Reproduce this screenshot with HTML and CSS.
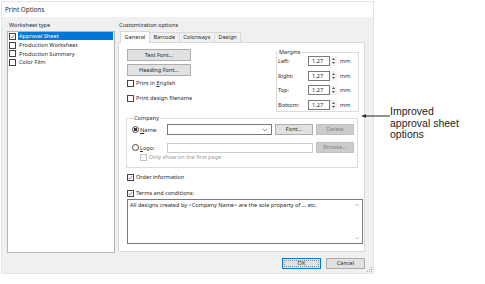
FILE: index.html
```html
<!DOCTYPE html>
<html lang="en">
<head>
  <meta charset="UTF-8">
  <title>Print Options</title>
  <link rel="stylesheet" href="styles.css">
</head>
<body>
  <div class="page">
    <div class="dialog">
      <div class="titlebar">Print Options</div>
      <div class="dialog-body">
        <div class="columns">
          <div class="col-left">
            <div class="caption">Worksheet type</div>
            <ul class="sheet-list">
              <li class="sheet-item selected">
                <span class="cb"><svg viewBox="0 0 5 5" width="5" height="5"><polyline points="0.6,2.6 1.9,3.9 4.4,0.9" fill="none" stroke="#555" stroke-width="0.7"/></svg></span>
                <span class="item-label">Approval Sheet</span>
              </li>
              <li class="sheet-item"><span class="cb"></span><span class="item-label">Production Worksheet</span></li>
              <li class="sheet-item"><span class="cb"></span><span class="item-label">Production Summary</span></li>
              <li class="sheet-item"><span class="cb"></span><span class="item-label">Color Film</span></li>
            </ul>
          </div>

          <div class="col-right">
            <div class="caption caption-right">Customization options</div>
            <div class="tabs">
              <span class="tab active">General</span>
              <span class="tab">Barcode</span>
              <span class="tab">Colorways</span>
              <span class="tab">Design</span>
            </div>
            <div class="tab-panel">
              <div class="panel-top">
                <div class="font-col">
                  <button class="btn btn-wide">Text Font...</button>
                  <button class="btn btn-wide">Heading Font...</button>
                  <label class="check-row first-check"><span class="cb"></span><span>Print in <u>E</u>nglish</span></label>
                  <label class="check-row"><span class="cb"></span><span>Print design filename</span></label>
                </div>
                <fieldset class="group margins">
                  <legend>Margins</legend>
                  <div class="margin-rows">
                    <div class="margin-row"><span class="margin-label">Left:</span><span class="field num">1.27</span><span class="spin"><svg viewBox="0 0 7 10" width="7" height="10"><polygon points="2,4 5,4 3.5,2" fill="#555"/><polygon points="2,6 5,6 3.5,8" fill="#555"/></svg></span><span class="unit">mm</span></div>
                    <div class="margin-row"><span class="margin-label">Right:</span><span class="field num">1.27</span><span class="spin"><svg viewBox="0 0 7 10" width="7" height="10"><polygon points="2,4 5,4 3.5,2" fill="#555"/><polygon points="2,6 5,6 3.5,8" fill="#555"/></svg></span><span class="unit">mm</span></div>
                    <div class="margin-row"><span class="margin-label">Top:</span><span class="field num">1.27</span><span class="spin"><svg viewBox="0 0 7 10" width="7" height="10"><polygon points="2,4 5,4 3.5,2" fill="#555"/><polygon points="2,6 5,6 3.5,8" fill="#555"/></svg></span><span class="unit">mm</span></div>
                    <div class="margin-row"><span class="margin-label">Bottom:</span><span class="field num">1.27</span><span class="spin"><svg viewBox="0 0 7 10" width="7" height="10"><polygon points="2,4 5,4 3.5,2" fill="#555"/><polygon points="2,6 5,6 3.5,8" fill="#555"/></svg></span><span class="unit">mm</span></div>
                  </div>
                </fieldset>
              </div>

              <fieldset class="group company">
                <legend>Company</legend>
                <div class="company-row">
                  <label class="radio-label"><span class="radio on"></span><span><u>N</u>ame:</span></label>
                  <span class="field combo"><svg viewBox="0 0 6 4" width="6" height="4"><polyline points="0.8,0.8 3,3 5.2,0.8" fill="none" stroke="#666" stroke-width="0.7"/></svg></span>
                  <button class="btn btn-small">Font...</button>
                  <button class="btn btn-small" disabled>Delete</button>
                </div>
                <div class="company-row logo-row">
                  <label class="radio-label"><span class="radio"></span><span><u>L</u>ogo:</span></label>
                  <span class="field logo-field"></span>
                  <button class="btn btn-small" disabled>Browse...</button>
                </div>
                <label class="check-row only-row"><span class="cb cb-off"></span><span>Only show on the first page</span></label>
              </fieldset>

              <label class="check-row option-row"><span class="cb"><svg viewBox="0 0 5 5" width="5" height="5"><polyline points="0.6,2.6 1.9,3.9 4.4,0.9" fill="none" stroke="#555" stroke-width="0.7"/></svg></span><span>Order information</span></label>
              <label class="check-row terms-row"><span class="cb"><svg viewBox="0 0 5 5" width="5" height="5"><polyline points="0.6,2.6 1.9,3.9 4.4,0.9" fill="none" stroke="#555" stroke-width="0.7"/></svg></span><span>Terms and conditions:</span></label>
              <div class="terms-box">
                <div class="terms-text">All designs created by &lt;Company Name&gt; are the sole property of ... etc.</div>
                <div class="scroll">
                  <svg viewBox="0 0 6 4" width="6" height="4"><polyline points="0.8,3.2 3,1 5.2,3.2" fill="none" stroke="#aaa" stroke-width="0.7"/></svg>
                  <svg viewBox="0 0 6 4" width="6" height="4"><polyline points="0.8,0.8 3,3 5.2,0.8" fill="none" stroke="#aaa" stroke-width="0.7"/></svg>
                </div>
              </div>
            </div>
          </div>
        </div>

        <div class="dialog-footer">
          <button class="btn btn-foot btn-default">OK</button>
          <button class="btn btn-foot">Cancel</button>
        </div>
        <svg class="grip" viewBox="0 0 5 5" width="5" height="5"><rect x="4" y="0" width="1" height="1" fill="#aaa"/><rect x="2" y="2" width="1" height="1" fill="#aaa"/><rect x="4" y="2" width="1" height="1" fill="#aaa"/><rect x="0" y="4" width="1" height="1" fill="#aaa"/><rect x="2" y="4" width="1" height="1" fill="#aaa"/><rect x="4" y="4" width="1" height="1" fill="#aaa"/></svg>
      </div>
    </div>

    <div class="callout">
      <svg class="callout-arrow" viewBox="0 0 29 14" width="29" height="14"><polygon points="0,10 5,8.3 5,11.7" fill="#222"/><line x1="4" y1="10" x2="29" y2="10" stroke="#222" stroke-width="1"/></svg>
      <div class="callout-text">Improved<br>approval sheet<br>options</div>
    </div>
  </div>
</body>
</html>
```

FILE: styles.css
```css
* {
  box-sizing: border-box;
}

body {
  margin: 0;
  background: #fff;
  font-family: "Noto Sans", "Open Sans", sans-serif;
  font-size: 5.6px;
  color: #2a2a2a;
}

.page {
  position: relative;
  width: 485px;
  height: 284px;
}

.dialog {
  margin: 1px 0 0 1px;
  width: 373px;
  border: 1px solid #e4e4e4;
  background: #fff;
}

.titlebar {
  height: 15px;
  padding: 4px 0 0 3px;
  line-height: 8px;
  font-size: 6.3px;
}

.dialog-body {
  position: relative;
  height: 256px;
  padding: 3px 8px 4px 5px;
  background: #f0f0f0;
}

.columns {
  display: flex;
  gap: 3px;
}

.col-left {
  width: 108px;
}

.col-right {
  width: 247px;
}

.caption {
  height: 11px;
  line-height: 11px;
  padding-left: 2px;
}

.caption-right {
  padding-left: 1px;
}

/* worksheet list */
.sheet-list {
  list-style: none;
  margin: 0;
  padding: 0 1px;
  height: 222px;
  background: #fff;
  border: 1px solid #b4b4b4;
}

.sheet-item {
  display: flex;
  align-items: center;
  gap: 2px;
  height: 8.7px;
}

.item-label {
  flex: 1;
  height: 8px;
  line-height: 8px;
  padding-left: 1px;
  white-space: nowrap;
}

.sheet-item.selected .item-label {
  background: #0078d7;
  color: #fff;
}

.cb {
  display: flex;
  align-items: center;
  justify-content: center;
  flex: none;
  width: 7px;
  height: 7px;
  border: 1px solid #444;
  background: #fff;
}

.cb-off {
  border-color: #c4c4c4;
}

.radio {
  flex: none;
  width: 7px;
  height: 7px;
  border: 1px solid #444;
  border-radius: 50%;
  background: #fff;
}

.radio.on {
  background: radial-gradient(circle, #333 1.4px, #fff 1.9px);
}

/* tabs */
.tabs {
  display: flex;
  align-items: flex-end;
  height: 11px;
  padding-left: 2px;
}

.tab {
  height: 10px;
  line-height: 9px;
  padding: 0 3.6px;
  margin-left: -1px;
  border: 1px solid #d9d9d9;
  border-bottom: none;
  background: #f0f0f0;
}

.tab:first-child {
  margin-left: 0;
}

.tab.active {
  position: relative;
  z-index: 1;
  height: 12px;
  line-height: 10px;
  margin-bottom: -1px;
  background: #fff;
}

.tab-panel {
  height: 210px;
  padding: 6px 0 0 7px;
  border: 1px solid #d9d9d9;
  background: #fff;
}

.panel-top {
  display: flex;
  justify-content: space-between;
  height: 63px;
  padding-right: 5px;
}

.font-col {
  display: flex;
  flex-direction: column;
  gap: 3px;
  padding-left: 1px;
}

/* buttons */
.btn {
  height: 12px;
  padding: 0;
  border: 1px solid #adadad;
  background: #e1e1e1;
  font-family: inherit;
  font-size: 5.6px;
  color: #2a2a2a;
  line-height: 10px;
  text-align: center;
}

.btn:disabled {
  border-color: #bfbfbf;
  background: #cccccc;
  color: #838383;
}

.btn-wide {
  width: 64px;
}

.btn-small {
  flex: none;
  width: 38px;
  height: 11px;
  line-height: 9px;
}

.btn-foot {
  width: 39px;
  height: 11px;
  line-height: 9px;
}

.btn-default {
  border-color: #0078d7;
  outline: 1px dotted #8a8a8a;
  outline-offset: -3px;
}

.check-row {
  display: flex;
  align-items: center;
  gap: 2px;
  height: 12px;
  white-space: nowrap;
}

.first-check {
  margin-top: -2px;
}

u {
  text-decoration: underline;
}

/* group boxes */
.group {
  margin: 0;
  padding: 0 0 1px 1px;
  min-width: 0;
  border: 1px solid #dcdcdc;
}

.group legend {
  padding: 0 1px;
  font-size: 5.6px;
  line-height: 7px;
}

.margins {
  width: 83px;
  height: 63px;
}

.margin-rows {
  display: flex;
  flex-direction: column;
  gap: 4.6px;
}

.margin-row {
  display: flex;
  align-items: center;
  height: 10px;
}

.margin-label {
  width: 30px;
}

.field {
  display: flex;
  align-items: center;
  height: 10px;
  border: 1px solid #7a7a7a;
  background: #fff;
}

.num {
  width: 22px;
  padding-left: 3px;
}

.spin {
  display: flex;
  width: 7px;
  height: 10px;
  background: #f4f4f4;
}

.unit {
  margin-left: 3px;
}

.company {
  margin: 3px 6px 0 0;
  padding: 2px 3px 6px 5px;
}

.company legend {
  margin-left: 1px;
}

.company-row {
  display: flex;
  align-items: center;
  gap: 3px;
  height: 11px;
}

.logo-row {
  margin-top: 7px;
}

.radio-label {
  display: flex;
  align-items: center;
  gap: 1px;
  width: 32px;
}

.combo {
  flex: 1;
  height: 11px;
  justify-content: flex-end;
  padding-right: 3px;
}

.logo-field {
  flex: 1;
  border-color: #cccccc;
}

.only-row {
  height: 8px;
  padding-left: 8px;
  color: #9a9a9a;
}

.option-row {
  height: 10px;
  margin-top: 4px;
  padding-left: 1px;
}

.terms-row {
  height: 10px;
  margin-top: 6px;
  padding-left: 1px;
}

.terms-box {
  display: flex;
  width: 236px;
  height: 45px;
  margin: 1px 0 0 1px;
  border: 1px solid #7a7a7a;
  background: #fff;
}

.terms-text {
  flex: 1;
  padding: 1px 2px;
  line-height: 8px;
}

.scroll {
  display: flex;
  flex-direction: column;
  justify-content: space-between;
  align-items: center;
  width: 10px;
  padding: 3px 0;
}

.dialog-footer {
  display: flex;
  justify-content: flex-end;
  gap: 5px;
  margin-top: 5px;
}

.grip {
  position: absolute;
  right: 1px;
  bottom: 1px;
}

/* annotation */
.callout {
  position: absolute;
  left: 361px;
  top: 105px;
  display: flex;
  align-items: flex-start;
}

.callout-arrow {
  flex: none;
}

.callout-text {
  font-family: "Liberation Sans", Arial, sans-serif;
  font-size: 10.5px;
  line-height: 11.5px;
  color: #222;
}
```
